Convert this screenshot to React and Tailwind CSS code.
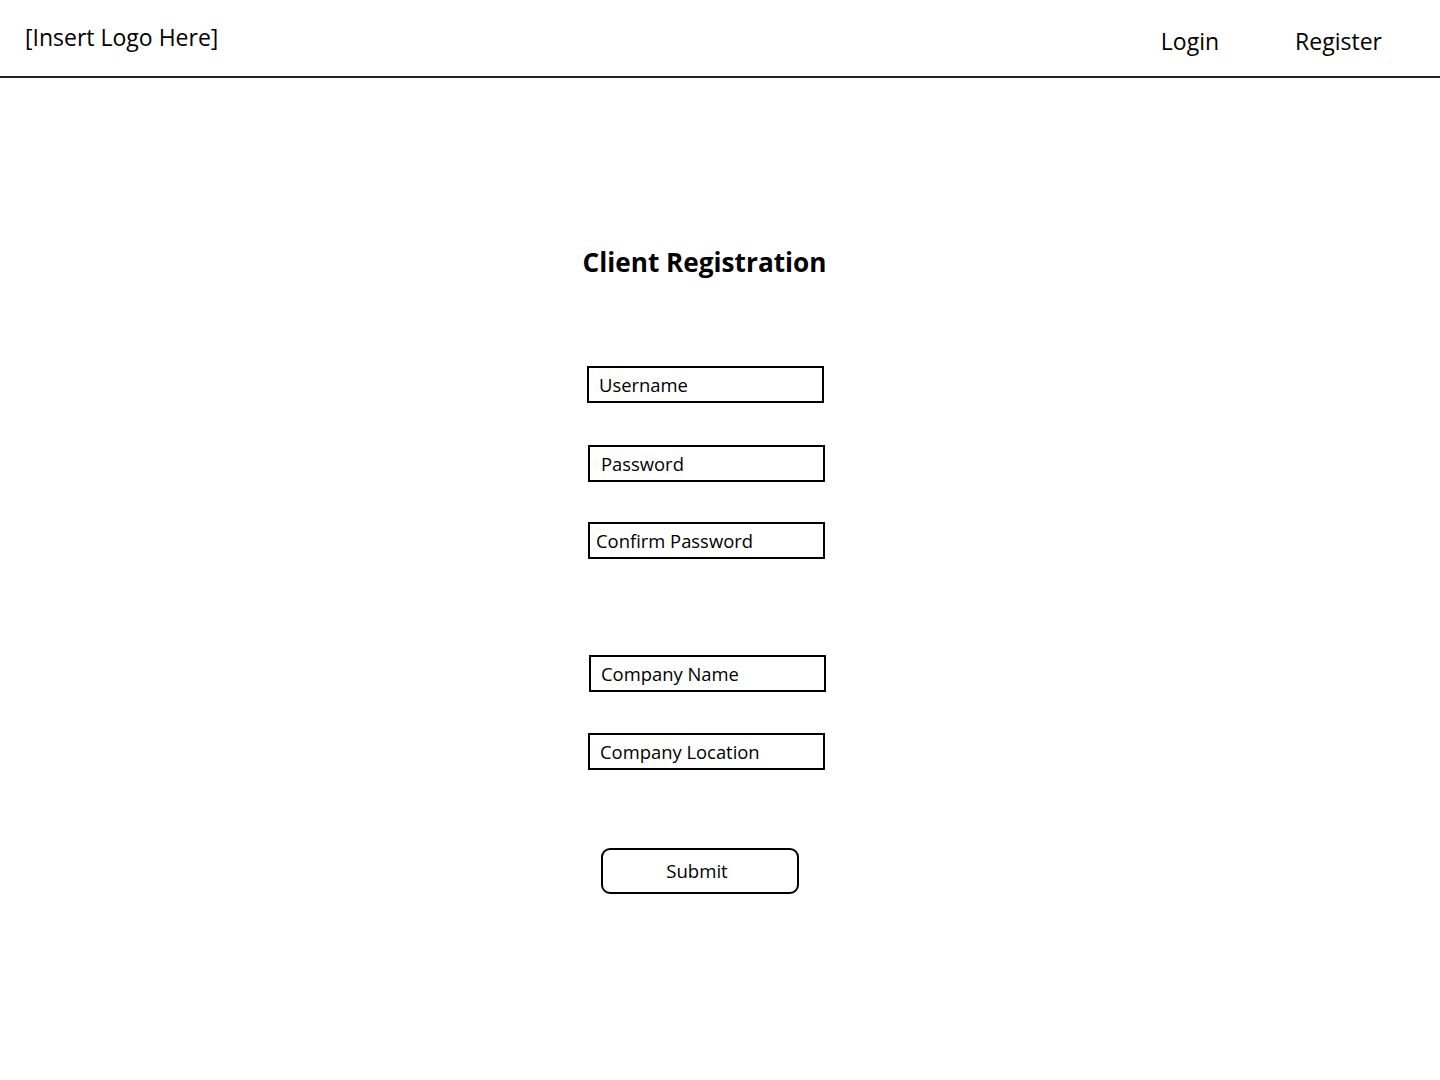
const FONT = { fontFamily: '"Open Sans", "Liberation Sans", sans-serif' };

const Field = ({ label, className = '', textPad = 'pl-[11px]' }) => (
  <div
    className={`flex h-[37px] w-[237px] items-center whitespace-nowrap border-2 border-black text-[18.4px] text-black ${textPad} ${className}`}
  >
    {label}
  </div>
);

const App = () => {
  return (
    <div className="min-h-[1080px] bg-white text-black" style={FONT}>
      <header className="flex h-[78px] items-start border-b-2 border-[#222]">
        <div className="pl-[25px] pt-[21px] text-[23px] leading-[32px]">[Insert Logo Here]</div>
        <nav className="ml-auto flex gap-[76px] pr-[58px] pt-[25px] text-[23px] leading-[32px]">
          <span>Login</span>
          <span>Register</span>
        </nav>
      </header>

      <main className="flex flex-col pl-[587px]">
        <div className="mt-[166px] flex w-[235px] justify-center">
          <h1 className="whitespace-nowrap text-[26.2px] font-bold leading-[36px]">
            Client Registration
          </h1>
        </div>

        <Field label="Username" className="mt-[86px]" textPad="pl-[10px]" />
        <Field label="Password" className="ml-[1px] mt-[42px]" textPad="pl-[11px]" />
        <Field label="Confirm Password" className="ml-[1px] mt-[40px]" textPad="pl-[6px]" />
        <Field label="Company Name" className="ml-[2px] mt-[96px]" textPad="pl-[10px]" />
        <Field label="Company Location" className="ml-[1px] mt-[41px]" textPad="pl-[10px]" />

        <button
          type="button"
          className="ml-[14px] mt-[78px] flex h-[46px] w-[198px] items-center justify-center rounded-[9px] border-2 border-black pr-[6px] text-[18.6px]"
        >
          Submit
        </button>
      </main>
    </div>
  );
};

export default App;
